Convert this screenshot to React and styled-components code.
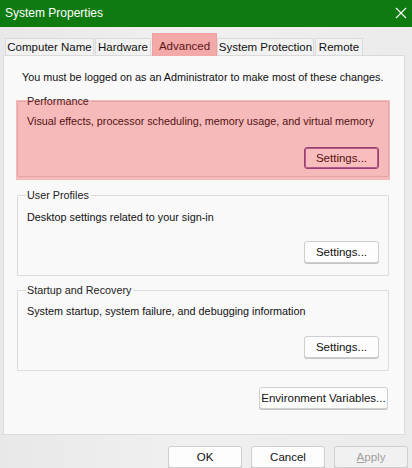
import React from "react";
import styled, { createGlobalStyle } from "styled-components";

const GlobalStyle = createGlobalStyle`
  html, body {
    margin: 0;
    padding: 0;
  }
  body {
    font-family: "Liberation Sans", Arial, sans-serif;
  }
`;

const Window = styled.div`
  width: 412px;
  height: 468px;
  overflow: hidden;
  display: flex;
  flex-direction: column;
  background: linear-gradient(90deg, #e8e8e8 0%, #f0f0f0 45%, #ebebeb 100%);
  font-size: 10.8px;
  color: #111;
`;

const TitleBar = styled.div`
  height: 27px;
  flex-shrink: 0;
  display: flex;
  align-items: center;
  justify-content: space-between;
  padding: 0 5px 1px 5px;
  box-sizing: border-box;
  background: #0f7a10;
  color: #fff;
  font-size: 12px;
`;

const CloseIcon = () => (
  <svg width="12" height="12" viewBox="0 0 12 12">
    <path d="M1 1 L11 11 M11 1 L1 11" stroke="#fff" strokeWidth="1.1" fill="none" />
  </svg>
);

const TabStrip = styled.div`
  display: flex;
  align-items: flex-end;
  height: 22px;
  margin-top: 6px;
  padding-left: 5px;
  position: relative;
  z-index: 1;
`;

const Tab = styled.div`
  height: ${(p) => (p.$active ? "23px" : "17px")};
  box-sizing: border-box;
  display: flex;
  align-items: center;
  justify-content: center;
  width: ${(p) => p.$w}px;
  margin-right: ${(p) => (p.$active ? "0" : "1px")};
  padding-top: ${(p) => (p.$active ? "1px" : "0")};
  background: ${(p) => (p.$active ? "#f4a9a9" : "#f2f2f2")};
  border: 1px solid ${(p) => (p.$active ? "#efa0a0" : "#dadada")};
  border-bottom: none;
  color: ${(p) => (p.$active ? "#5a1717" : "#111")};
  font-size: 11.5px;
  margin-bottom: ${(p) => (p.$active ? "-1px" : "0")};
`;

const Panel = styled.div`
  height: 380px;
  margin: 0 7px 0 3px;
  box-sizing: border-box;
  border: 1px solid #dadada;
  background: #f9f9f9;
  padding: 13px 15px 0 13px;
  display: flex;
  flex-direction: column;
  align-items: stretch;
`;

const Intro = styled.div`
  line-height: 16px;
  padding-left: 5px;
  white-space: nowrap;
`;

const Group = styled.fieldset`
  position: relative;
  margin: ${(p) => p.$top}px 0 0 0;
  padding: ${(p) => p.$pad}px 9px ${(p) => p.$bottom}px 9px;
  border: 1px solid #dcdcdc;
  border-radius: 1px;
  display: flex;
  flex-direction: column;
  min-width: 0;

  ${(p) =>
    p.$highlight &&
    `
    &::after {
      content: "";
      position: absolute;
      top: -9px;
      left: -2px;
      right: -2px;
      bottom: -4px;
      background: rgba(240, 20, 20, 0.27);
      pointer-events: none;
    }
  `}
`;

const Legend = styled.legend`
  padding: 0 2px 0 1px;
  margin-left: -1px;
  line-height: 16px;
  color: #222;
`;

const Description = styled.div`
  line-height: 16px;
  white-space: nowrap;
`;

const ButtonRow = styled.div`
  display: flex;
  justify-content: flex-end;
  margin-top: ${(p) => p.$top}px;
`;

const Button = styled.button`
  width: ${(p) => p.$w ?? 75}px;
  height: 22px;
  box-sizing: border-box;
  padding: 0;
  border-radius: 3px;
  border: 1px solid ${(p) => (p.$focus ? "#7a4f97" : "#cfcfcf")};
  box-shadow: ${(p) => (p.$focus ? "inset 0 0 0 1px #9a73b3" : "0 1px 0 #c4c4c4")};
  background: ${(p) => (p.$disabled ? "#f1f1f1" : "#fdfdfd")};
  color: ${(p) => (p.$disabled ? "#a0a0a0" : "#111")};
  font-family: inherit;
  font-size: 11.5px;
  line-height: 20px;
`;

const EnvRow = styled.div`
  display: flex;
  justify-content: flex-end;
  margin-top: 16px;
  padding-right: 1px;
`;

const Footer = styled.div`
  display: flex;
  justify-content: flex-end;
  gap: 9px;
  padding: 11px 4px 0 0;
`;

const tabs = [
  { label: "Computer Name", w: 89 },
  { label: "Hardware", w: 56 },
  { label: "Advanced", w: 65, active: true },
  { label: "System Protection", w: 97 },
  { label: "Remote", w: 48 },
];

const groups = [
  {
    title: "Performance",
    text: "Visual effects, processor scheduling, memory usage, and virtual memory",
    top: 8,
    pad: 4,
    gap: 18,
    bottom: 7,
    highlight: true,
    focus: true,
  },
  {
    title: "User Profiles",
    text: "Desktop settings related to your sign-in",
    top: 10,
    pad: 6,
    gap: 16,
    bottom: 12,
  },
  {
    title: "Startup and Recovery",
    text: "System startup, system failure, and debugging information",
    top: 6,
    pad: 5,
    gap: 17,
    bottom: 12,
  },
];

export default function App() {
  return (
    <>
      <GlobalStyle />
      <Window>
        <TitleBar>
          <span>System Properties</span>
          <CloseIcon />
        </TitleBar>
        <TabStrip>
          {tabs.map((t) => (
            <Tab key={t.label} $w={t.w} $active={t.active}>
              {t.label}
            </Tab>
          ))}
        </TabStrip>
        <Panel>
          <Intro>You must be logged on as an Administrator to make most of these changes.</Intro>
          {groups.map((g) => (
            <Group
              key={g.title}
              $top={g.top}
              $pad={g.pad}
              $bottom={g.bottom}
              $highlight={g.highlight}
            >
              <Legend>{g.title}</Legend>
              <Description>{g.text}</Description>
              <ButtonRow $top={g.gap}>
                <Button $focus={g.focus}>Settings...</Button>
              </ButtonRow>
            </Group>
          ))}
          <EnvRow>
            <Button $w={129}>Environment Variables...</Button>
          </EnvRow>
        </Panel>
        <Footer>
          <Button $w={74}>OK</Button>
          <Button $w={74}>Cancel</Button>
          <Button $w={74} $disabled>
            <u>A</u>pply
          </Button>
        </Footer>
      </Window>
    </>
  );
}
